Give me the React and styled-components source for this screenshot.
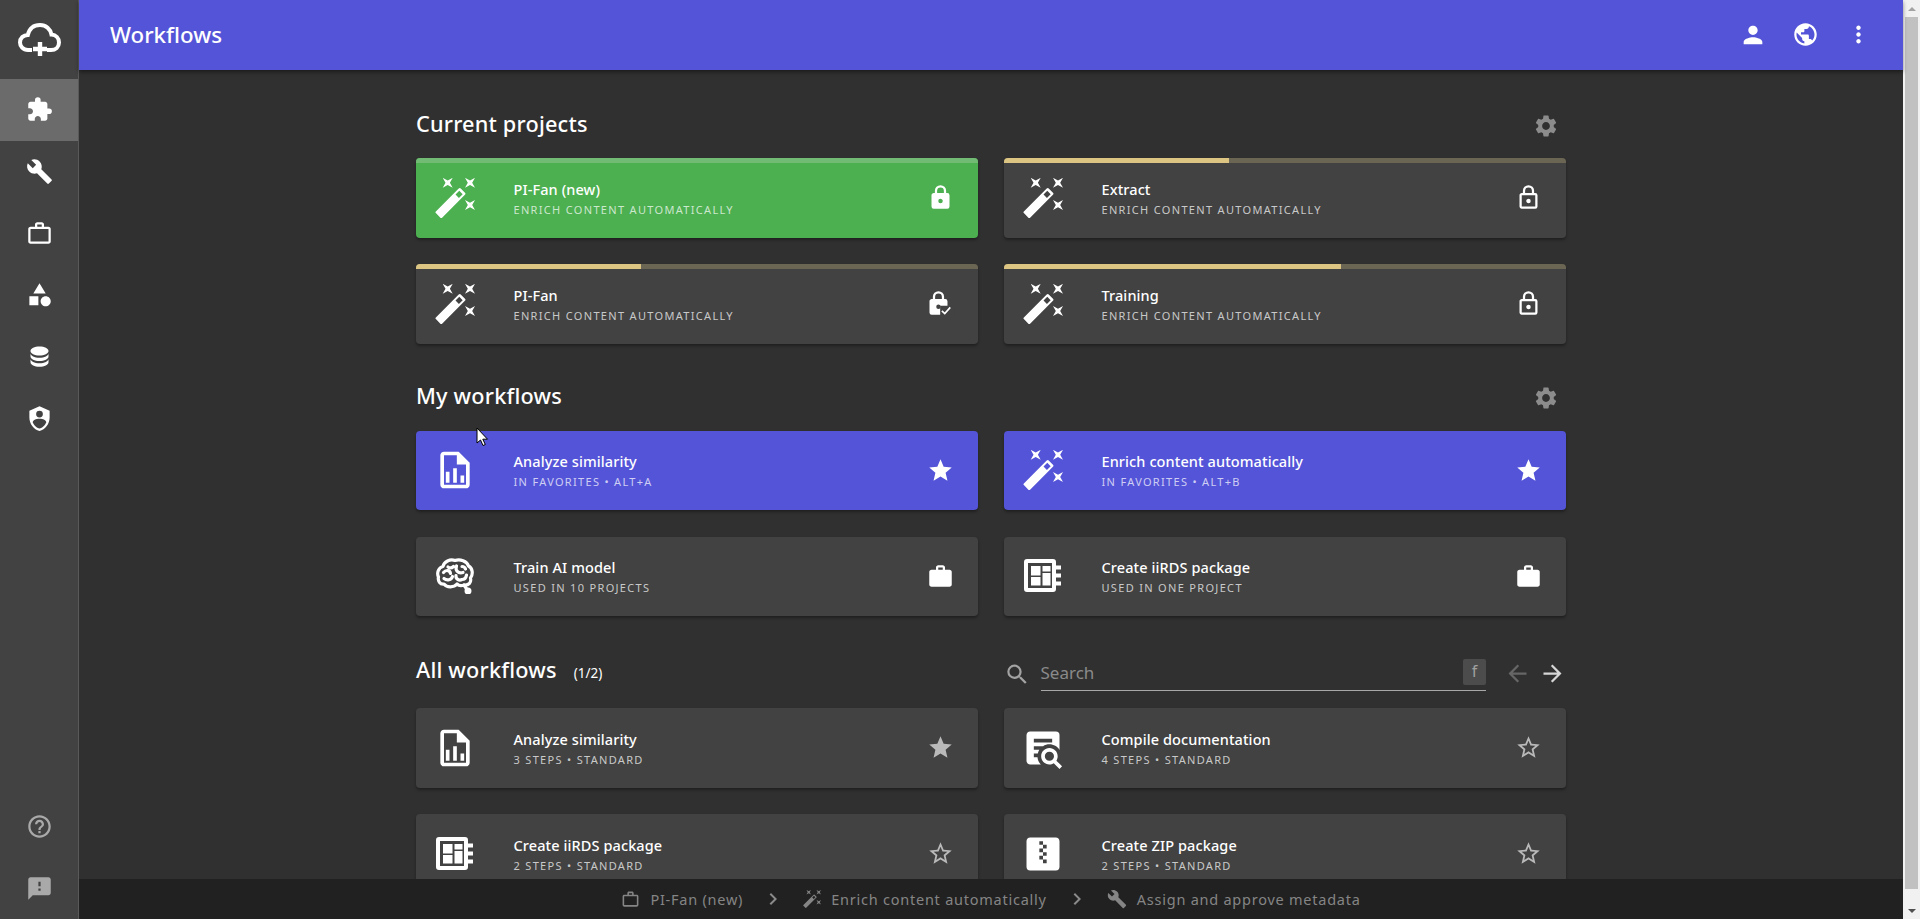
import React from "react";
import styled, { createGlobalStyle } from "styled-components";
import {
  MdExtension, MdBuild, MdWorkOutline, MdWork, MdHelpOutline, MdFeedback, MdPerson, MdPublic,
  MdMoreVert, MdSettings, MdSearch, MdArrowBack, MdArrowForward, MdStar, MdStarBorder, MdChevronRight,
} from "react-icons/md";

const Global = createGlobalStyle`
  html, body { margin: 0; height: 100%; overflow: hidden; background: #303030; }
  #root { height: 100%; }
  * { box-sizing: border-box; }
  body { font-family: "Noto Sans", "Open Sans", sans-serif; color: #fff; }
`;

const Page = styled.div`display: flex; width: 1920px; height: 919px; position: relative; overflow: hidden;`;

const Sidebar = styled.nav`
  width: 79px; flex: none; display: flex; flex-direction: column;
  background: #424242; border-right: 1px solid #595959;
`;
const Logo = styled.div`height: 79px; display: flex; align-items: center; justify-content: center; color: #fff; padding-left: 1px;`;
const NavItem = styled.div`
  height: 61.7px; display: flex; align-items: center; justify-content: center;
  color: ${p => (p.$dim ? "#a9a9a9" : "#fff")};
  background: ${p => (p.$active ? "#6b6b6b" : "transparent")};
`;
const Spacer = styled.div`flex: 1;`;

const Main = styled.div`flex: 1; min-width: 0; display: flex; flex-direction: column; background: #303030;`;
const Header = styled.header`
  height: 70px; flex: none; display: flex; align-items: center; justify-content: space-between;
  background: #5454d8; padding: 0 18px 0 31px; box-shadow: 0 2px 4px rgba(0,0,0,.45); position: relative; z-index: 2;
`;
const HeaderTitle = styled.h1`margin: 0; font-size: 22.3px; font-weight: 500; line-height: 1;`;
const HeaderActions = styled.div`display: flex;`;
const HeaderButton = styled.div`width: 53px; display: flex; justify-content: center; color: #fff;`;

const Content = styled.main`flex: 1; min-height: 0; overflow: hidden; padding-top: 30px;`;
const Inner = styled.div`width: 1150px; margin: 0 auto;`;
const Section = styled.section`margin-bottom: 28px;`;
const Head = styled.div`
  height: ${p => p.$h || 48}px; margin-bottom: ${p => p.$mb || 10}px;
  display: flex; align-items: center; justify-content: space-between;
`;
const Title = styled.h2`margin: 0; font-size: 21.7px; font-weight: 500; line-height: 1; letter-spacing: .2px;`;
const Count = styled.span`font-size: 13.5px; font-weight: 400; margin-left: 17px; letter-spacing: 0;`;
const Gear = styled.div`color: #8c8c8c; display: flex; margin: 3px 7px 0 0;`;

const Grid = styled.div`display: grid; grid-template-columns: 562px 562px; column-gap: 26px; row-gap: 26.5px;`;
const bgs = { gray: "#424242", green: "#4caf50", blue: "#5454d8" };
const Card = styled.article`
  position: relative; height: 79.5px; border-radius: 4px; overflow: hidden; display: flex; align-items: center;
  background: ${p => bgs[p.$tone]}; box-shadow: 0 2px 3px rgba(0,0,0,.35);
`;
const Progress = styled.div`
  position: absolute; left: 0; right: 0; top: 0; height: 4.5px;
  background: ${p => (p.$tone === "green" ? "#71bb74" : "#6b6553")};
`;
const ProgressFill = styled.div`height: 100%; background: #dcc583;`;
const CardIcon = styled.div`width: 78px; flex: none; display: flex; justify-content: center; color: #fff; margin-right: 19.5px;`;
const CardText = styled.div`flex: 1; min-width: 0; display: flex; flex-direction: column; gap: 5px; padding-top: 1px;`;
const CardTitle = styled.div`font-size: 14.5px; font-weight: 500; line-height: 18px; letter-spacing: .1px;`;
const CardSub = styled.div`font-size: 11px; line-height: 14px; letter-spacing: 1.32px; color: rgba(255,255,255,.72); text-transform: uppercase;`;
const CardAction = styled.div`
  width: 76px; flex: none; display: flex; justify-content: center;
  color: ${p => (p.$dim ? "#b9b9b9" : "#fff")};
`;

const SearchRow = styled.div`width: 562px; display: flex; align-items: center; position: relative; top: 4px;`;
const SearchIcon = styled.div`width: 36.5px; display: flex; justify-content: center; color: #a3a3a3; flex: none; padding-right: 10px;`;
const SearchBox = styled.div`
  width: 445.5px; height: 32px; flex: none; display: flex; align-items: flex-start; justify-content: space-between;
  border-bottom: 1px solid #a8a8a8; position: relative; top: 1px;
`;
const SearchText = styled.span`font-size: 17px; line-height: 28px; color: #8a8a8a;`;
const KeyChip = styled.span`
  width: 23px; height: 26px; border-radius: 2px; background: #4c4c4c; color: #a0a0a0;
  font-size: 16px; line-height: 24px; text-align: center;
`;
const Pager = styled.div`flex: 1; display: flex; padding-left: 18px; gap: 8px; margin-top: -2px;`;
const PagerButton = styled.div`display: flex; color: ${p => (p.$off ? "#666666" : "#d6d6d6")};`;

const Footer = styled.footer`
  height: 40px; flex: none; background: #212121; display: flex; align-items: center; justify-content: center;
  color: #858585; position: relative; z-index: 2;
`;
const Crumb = styled.div`display: flex; align-items: center; gap: 10px; font-size: 14.5px; letter-spacing: .76px; white-space: nowrap;`;
const CrumbSep = styled.div`display: flex; margin: 0 18px; color: #8a8a8a;`;

const Scrollbar = styled.div`width: 17px; flex: none; background: #f1f1f1; display: flex; flex-direction: column; align-items: center;`;
const ScrollBtn = styled.div`height: 17px; width: 100%; display: flex; align-items: center; justify-content: center; flex: none;`;
const ScrollThumb = styled.div`width: 13px; height: 872px; background: #c1c1c1; flex: none;`;
const Arrow = styled.div`
  width: 0; height: 0; border-left: 4px solid transparent; border-right: 4px solid transparent;
  ${p => (p.$down ? "border-top: 4px solid #505050;" : "border-bottom: 4px solid #a3a3a3;")}
`;
const Cursor = styled.svg`position: absolute; left: 476px; top: 427px; z-index: 5;`;

const Mdi = ({ d, size = 44, vb = "0 0 24 24", ...rest }) => (
  <svg width={size} height={size} viewBox={vb} fill="currentColor" {...rest}><path d={d} /></svg>
);

const P = {
  database: "M12,3C7.58,3 4,4.79 4,7C4,9.21 7.58,11 12,11C16.42,11 20,9.21 20,7C20,4.79 16.42,3 12,3M4,9V12C4,14.21 7.58,16 12,16C16.42,16 20,14.21 20,12V9C20,11.21 16.42,13 12,13C7.58,13 4,11.21 4,9M4,14V17C4,19.21 7.58,21 12,21C16.42,21 20,19.21 20,17V14C20,16.21 16.42,18 12,18C7.58,18 4,16.21 4,14Z",
  shield: "M12,1L3,5V11C3,16.55 6.84,21.74 12,23C17.16,21.74 21,16.55 21,11V5L12,1M12,5A3,3 0 0,1 15,8A3,3 0 0,1 12,11A3,3 0 0,1 9,8A3,3 0 0,1 12,5M17.13,17C15.92,18.85 14.11,20.24 12,20.92C9.89,20.24 8.08,18.85 6.87,17C6.53,16.5 6.24,16 6,15.47C6,13.75 8.71,12.3 12,12.3C15.29,12.3 18,13.72 18,15.47C17.76,16 17.47,16.5 17.13,17Z",
  shapes: "M11 13.5v8H3v-8h8zM12 2l5.5 9h-11L12 2zm5.5 11.5c2.5 0 4.5 2 4.5 4.5s-2 4.5-4.5 4.5-4.5-2-4.5-4.5 2-4.5 4.5-4.5z",
  lock: "M12,17A2,2 0 0,0 14,15C14,13.89 13.1,13 12,13A2,2 0 0,0 10,15A2,2 0 0,0 12,17M18,8A2,2 0 0,1 20,10V20A2,2 0 0,1 18,22H6A2,2 0 0,1 4,20V10C4,8.89 4.9,8 6,8H7V6A5,5 0 0,1 12,1A5,5 0 0,1 17,6V8H18M12,3A3,3 0 0,0 9,6V8H15V6A3,3 0 0,0 12,3Z",
  lockOutline: "M12,17C10.89,17 10,16.1 10,15C10,13.89 10.89,13 12,13A2,2 0 0,1 14,15A2,2 0 0,1 12,17M18,20V10H6V20H18M18,8A2,2 0 0,1 20,10V20A2,2 0 0,1 18,22H6C4.89,22 4,21.1 4,20V10C4,8.89 4.89,8 6,8H7V6A5,5 0 0,1 12,1A5,5 0 0,1 17,6V8H18M12,3A3,3 0 0,0 9,6V8H15V6A3,3 0 0,0 12,3Z",
  fileChart: "M14 2H6C4.9 2 4 2.9 4 4V20C4 21.1 4.9 22 6 22H18C19.1 22 20 21.1 20 20V8L14 2M18 20H6V4H13V9H18V20M9 13V19H7V13H9M15 15V19H17V15H15M11 11V19H13V11H11Z",
  textSearch: "M15.5,12C18,12 20,14 20,16.5C20,17.38 19.75,18.21 19.31,18.9L22.39,22L21,23.39L17.88,20.32C17.19,20.75 16.37,21 15.5,21C13,21 11,19 11,16.5C11,14 13,12 15.5,12M15.5,14A2.5,2.5 0 0,0 13,16.5A2.5,2.5 0 0,0 15.5,19A2.5,2.5 0 0,0 18,16.5A2.5,2.5 0 0,0 15.5,14M7,15V17H9C9.14,18.55 9.8,19.94 10.81,21H5C3.89,21 3,20.1 3,19V5C3,3.89 3.89,3 5,3H19A2,2 0 0,1 21,5V13.03C19.85,11.21 17.82,10 15.5,10C14.23,10 13.04,10.37 12.04,11H7V13H10C9.64,13.6 9.34,14.28 9.17,15H7M17,9V7H7V9H17Z",
  zip: "M14,17H12V15H10V13H12V15H14M14,9H12V11H14V13H12V11H10V9H12V7H10V5H12V7H14M19,3H5C3.89,3 3,3.89 3,5V19A2,2 0 0,0 5,21H19A2,2 0 0,0 21,19V5C21,3.89 20.1,3 19,3Z",
};

const Sparkle = ({ x, y, s = 1 }) => (
  <path transform={`translate(${x} ${y}) scale(${s})`} d="M-5,-5 L0,-2.2 L5,-5 L2.2,0 L5,5 L0,2.2 L-5,5 L-2.2,0 Z" />
);
const Wand = ({ size = 40 }) => (
  <svg width={size} height={size} viewBox="0 0 40 40" fill="currentColor">
    <Sparkle x={12.7} y={4.8} />
    <Sparkle x={35} y={4.8} />
    <Sparkle x={35} y={27} />
    <g transform="translate(15.5 25) rotate(-45)">
      <path fillRule="evenodd" d="M-17.5,-3.2 Q-17.5,-4.4 -16.3,-4.4 H16 Q17.5,-4.4 17.5,-3 V3 Q17.5,4.4 16,4.4 H-16.3 Q-17.5,4.4 -17.5,3.2 Z M9.5,-2.4 V2.4 H14.8 V-2.4 Z" />
    </g>
  </svg>
);
const Brain = () => (
  <svg width="38" height="36" viewBox="0 0 38 36" fill="none" stroke="currentColor" strokeWidth="3.2" strokeLinecap="round" strokeLinejoin="round">
    <path d="M8,26 C4,26.5 1.5,23 2.5,19 C0.5,15 2.5,9.5 7,8.5 C8,3.5 14,0.8 19,2.5 C24,0.8 31,3 32.5,8 C36.5,10 37.5,16 34.5,20 C35.5,24.5 33,27.5 28,27 C25.5,28 23,28 21,26 C18,29.5 11,30 8,26 Z" />
    <path d="M28,27 L31,31.5" />
    <circle cx="32" cy="33" r="1.9" fill="currentColor" />
    <path d="M7.5,14.5 C10,11.5 14,12 14.5,15.5 M12,9 C14,10.5 16,10 17.5,8.5 M20.5,8 C19,12 22,16 27,14.5 M26,8.5 C28,8.5 29,9.5 29.5,11 M8,20.5 C11,23 15.5,22 16.5,18.5 M20,17.5 C19.5,21 23,23 26,21.5 C28,21.5 30,20 30.5,17" />
  </svg>
);
const Package = () => (
  <svg width="38" height="34" viewBox="0 0 38 34" fill="currentColor">
    <path fillRule="evenodd" d="M3,0 H29 Q32,0 32,3 V30 Q32,33 29,33 H3 Q0,33 0,30 V3 Q0,0 3,0 Z M4,4 V29 H28 V4 Z" />
    <rect x="7" y="7" width="9.5" height="9.5" />
    <rect x="18.5" y="7" width="8" height="5.5" />
    <rect x="7" y="18" width="9.5" height="8.5" />
    <rect x="18.5" y="14" width="8" height="12.5" />
    <rect x="32" y="6.5" width="5" height="4" />
    <rect x="32" y="14.5" width="5" height="4" />
    <rect x="32" y="22.5" width="5" height="4" />
  </svg>
);
const Cloud = () => (
  <svg width="44" height="36" viewBox="0 0 44 36" fill="none" stroke="currentColor" strokeWidth="4">
    <path d="M14,28 H10 C5,28 2,24 2,20.5 C2,16 5.5,13 9.8,13 C11.4,6.5 16,3 22,3 C28,3 32.5,7 33.5,12.6 C38,13 41,16.5 41,20.5 C41,25 37.5,28 33,28 H29" />
    <path d="M22,20 V34 M15,27 H29" strokeWidth="4.4" />
  </svg>
);
const LockCheck = ({ bg }) => (
  <svg width="30" height="27" viewBox="0 0 26.7 24" fill="currentColor">
    <path d={P.lock} />
    <rect x="13.5" y="14" width="13" height="10" fill={bg} />
    <path d="M15,18.5 L17.6,21 L22.5,15.5" fill="none" stroke="currentColor" strokeWidth="1.5" />
  </svg>
);

const Lock = ({ kind, tone }) => {
  if (kind === "check") return <LockCheck bg={bgs[tone]} />;
  return <Mdi size={27} d={kind === "solid" ? P.lock : P.lockOutline} />;
};

const WF = {
  wand: <Wand />,
  chart: <Mdi d={P.fileChart} size={44} />,
  brain: <Brain />,
  pack: <Package />,
  search: <Mdi d={P.textSearch} size={44} />,
  zip: <Mdi d={P.zip} size={44} />,
};
const A = {
  solid: <Lock kind="solid" />,
  outline: <Lock kind="outline" />,
  check: <Lock kind="check" tone="gray" />,
  star: <MdStar size={27} />,
  starO: <MdStarBorder size={27} />,
  work: <MdWork size={27} />,
};

const ENRICH = "Enrich content automatically";
const current = [
  { icon: "wand", title: "PI-Fan (new)", sub: ENRICH, tone: "green", progress: 100, act: "solid" },
  { icon: "wand", title: "Extract", sub: ENRICH, tone: "gray", progress: 40, act: "outline" },
  { icon: "wand", title: "PI-Fan", sub: ENRICH, tone: "gray", progress: 40, act: "check" },
  { icon: "wand", title: "Training", sub: ENRICH, tone: "gray", progress: 60, act: "outline" },
];
const mine = [
  { icon: "chart", title: "Analyze similarity", sub: "In favorites • Alt+A", tone: "blue", act: "star" },
  { icon: "wand", title: ENRICH, sub: "In favorites • Alt+B", tone: "blue", act: "star" },
  { icon: "brain", title: "Train AI model", sub: "Used in 10 projects", tone: "gray", act: "work" },
  { icon: "pack", title: "Create iiRDS package", sub: "Used in one project", tone: "gray", act: "work" },
];
const all = [
  { icon: "chart", title: "Analyze similarity", sub: "3 steps • Standard", tone: "gray", act: "star", dim: true },
  { icon: "search", title: "Compile documentation", sub: "4 steps • Standard", tone: "gray", act: "starO", dim: true },
  { icon: "pack", title: "Create iiRDS package", sub: "2 steps • Standard", tone: "gray", act: "starO", dim: true },
  { icon: "zip", title: "Create ZIP package", sub: "2 steps • Standard", tone: "gray", act: "starO", dim: true },
];

const WorkCard = ({ c }) => (
  <Card $tone={c.tone}>
    {c.progress != null && (
      <Progress $tone={c.tone}>
        {c.progress < 100 && <ProgressFill style={{ width: `${c.progress}%` }} />}
      </Progress>
    )}
    <CardIcon>{WF[c.icon]}</CardIcon>
    <CardText>
      <CardTitle>{c.title}</CardTitle>
      <CardSub>{c.sub}</CardSub>
    </CardText>
    <CardAction $dim={c.dim}>{A[c.act]}</CardAction>
  </Card>
);

export default function App() {
  return (
    <Page>
      <Global />
      <Sidebar>
        <Logo><Cloud /></Logo>
        <NavItem $active><MdExtension size={27} /></NavItem>
        <NavItem><MdBuild size={27} /></NavItem>
        <NavItem><MdWorkOutline size={27} /></NavItem>
        <NavItem><Mdi d={P.shapes} size={27} /></NavItem>
        <NavItem><Mdi d={P.database} size={27} /></NavItem>
        <NavItem><Mdi d={P.shield} size={27} /></NavItem>
        <Spacer />
        <NavItem $dim><MdHelpOutline size={27} /></NavItem>
        <NavItem $dim><MdFeedback size={27} /></NavItem>
      </Sidebar>
      <Main>
        <Header>
          <HeaderTitle>Workflows</HeaderTitle>
          <HeaderActions>
            <HeaderButton><MdPerson size={28} /></HeaderButton>
            <HeaderButton><MdPublic size={27} /></HeaderButton>
            <HeaderButton><MdMoreVert size={27} /></HeaderButton>
          </HeaderActions>
        </Header>
        <Content>
          <Inner>
            <Section>
              <Head><Title>Current projects</Title><Gear><MdSettings size={26} /></Gear></Head>
              <Grid>{current.map(c => <WorkCard key={c.title} c={c} />)}</Grid>
            </Section>
            <Section>
              <Head $h={49}><Title>My workflows</Title><Gear><MdSettings size={26} /></Gear></Head>
              <Grid>{mine.map(c => <WorkCard key={c.title} c={c} />)}</Grid>
            </Section>
            <Section>
              <Head $h={52} $mb={12}>
                <Title>All workflows<Count>(1/2)</Count></Title>
                <SearchRow>
                  <SearchIcon><MdSearch size={29} /></SearchIcon>
                  <SearchBox>
                    <SearchText>Search</SearchText>
                    <KeyChip>f</KeyChip>
                  </SearchBox>
                  <Pager>
                    <PagerButton $off><MdArrowBack size={27} /></PagerButton>
                    <PagerButton><MdArrowForward size={27} /></PagerButton>
                  </Pager>
                </SearchRow>
              </Head>
              <Grid>{all.map(c => <WorkCard key={c.title} c={c} />)}</Grid>
            </Section>
          </Inner>
        </Content>
        <Footer>
          <Crumb><MdWorkOutline size={19} />PI-Fan (new)</Crumb>
          <CrumbSep><MdChevronRight size={24} /></CrumbSep>
          <Crumb><Wand size={18} />Enrich content automatically</Crumb>
          <CrumbSep><MdChevronRight size={24} /></CrumbSep>
          <Crumb><MdBuild size={20} />Assign and approve metadata</Crumb>
        </Footer>
      </Main>
      <Scrollbar>
        <ScrollBtn><Arrow /></ScrollBtn>
        <ScrollThumb />
        <Spacer />
        <ScrollBtn><Arrow $down /></ScrollBtn>
      </Scrollbar>
      <Cursor width="13" height="20" viewBox="0 0 13 20">
        <path d="M1,1 V16 L4.5,13 L7,18.5 L9.3,17.5 L6.8,12.2 H11.5 Z" fill="#fff" stroke="#000" strokeWidth="1" />
      </Cursor>
    </Page>
  );
}
